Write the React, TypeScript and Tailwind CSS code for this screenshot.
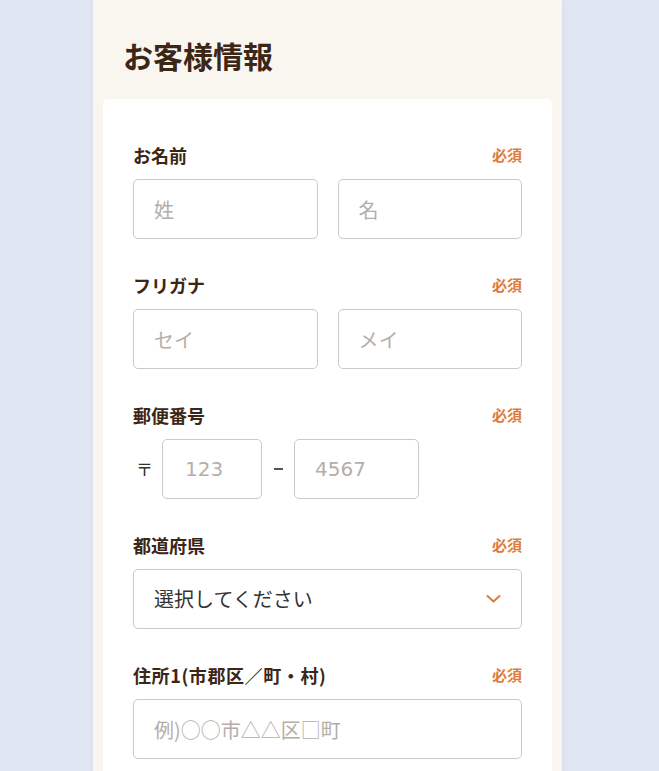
import React from "react";

const font = { fontFamily: '"Noto Sans CJK JP", "Noto Sans", sans-serif' };
const digitFont = { fontFamily: '"DejaVu Sans", "Noto Sans CJK JP", sans-serif' };

function Label({ text, wide = false }: { text: string; wide?: boolean }) {
  return (
    <div className="flex items-center justify-between h-[24px] mb-[12px]">
      <span
        className={
          "text-[18px] font-bold text-[#3c2616] leading-[24px] " + (wide ? "tracking-[0.6px]" : "")
        }
      >
        {text}
      </span>
      <span className="text-[15px] font-bold text-[#e07a38] leading-[24px]">必須</span>
    </div>
  );
}

function Field({
  placeholder,
  className = "",
  digits = false,
}: {
  placeholder: string;
  className?: string;
  digits?: boolean;
}) {
  return (
    <input
      type="text"
      placeholder={placeholder}
      className={
        "h-[60px] rounded-[5px] border border-[#cacaca] bg-white px-[20px] text-[20px] text-[#333] placeholder:text-[#b5aea8] outline-none " +
        className
      }
      style={digits ? digitFont : font}
    />
  );
}

export default function App() {
  return (
    <div className="min-h-screen bg-[#e0e6f3] pl-[93px]" style={font}>
      <div className="w-[469px] min-h-screen bg-[#f9f6ef] shadow-[0_0_6px_rgba(0,0,0,0.06)] px-[10px] pt-[34px]">
        <h1 className="pl-[20px] text-[30px] font-bold leading-[42px] text-[#3c2616]">お客様情報</h1>
        <div className="mt-[23px] rounded-[5px] bg-white px-[30px] pt-[44px] pb-[34px] flex flex-col gap-[34px]">
          <div>
            <Label text="お名前" />
            <div className="grid grid-cols-2 gap-[20px]">
              <Field placeholder="姓" className="w-full" />
              <Field placeholder="名" className="w-full" />
            </div>
          </div>
          <div>
            <Label text="フリガナ" />
            <div className="grid grid-cols-2 gap-[20px]">
              <Field placeholder="セイ" className="w-full" />
              <Field placeholder="メイ" className="w-full" />
            </div>
          </div>
          <div>
            <Label text="郵便番号" />
            <div className="flex items-center">
              <span className="w-[29px] pl-[3px] text-[17px] text-[#333]">〒</span>
              <Field placeholder="123" className="w-[100px] px-[22px]" digits />
              <span className="w-[32px] flex justify-center">
                <span className="block w-[9px] h-[1.5px] bg-[#555]" />
              </span>
              <Field placeholder="4567" className="w-[125px]" digits />
            </div>
          </div>
          <div>
            <Label text="都道府県" />
            <div className="relative h-[60px] rounded-[5px] border border-[#cacaca] bg-white flex items-center px-[20px]">
              <span className="text-[20px] text-[#333]">選択してください</span>
              <svg
                className="absolute right-[20px] top-1/2 -translate-y-1/2"
                width="15"
                height="9"
                viewBox="0 0 15 9"
                fill="none"
              >
                <path d="M1.5 1.5 L7.5 7 L13.5 1.5" stroke="#e07a38" strokeWidth="2" strokeLinecap="round" strokeLinejoin="round" />
              </svg>
            </div>
          </div>
          <div>
            <Label text="住所1(市郡区／町・村)" wide />
            <Field placeholder="例)○○市△△区□町" className="w-full" />
          </div>
        </div>
      </div>
    </div>
  );
}
